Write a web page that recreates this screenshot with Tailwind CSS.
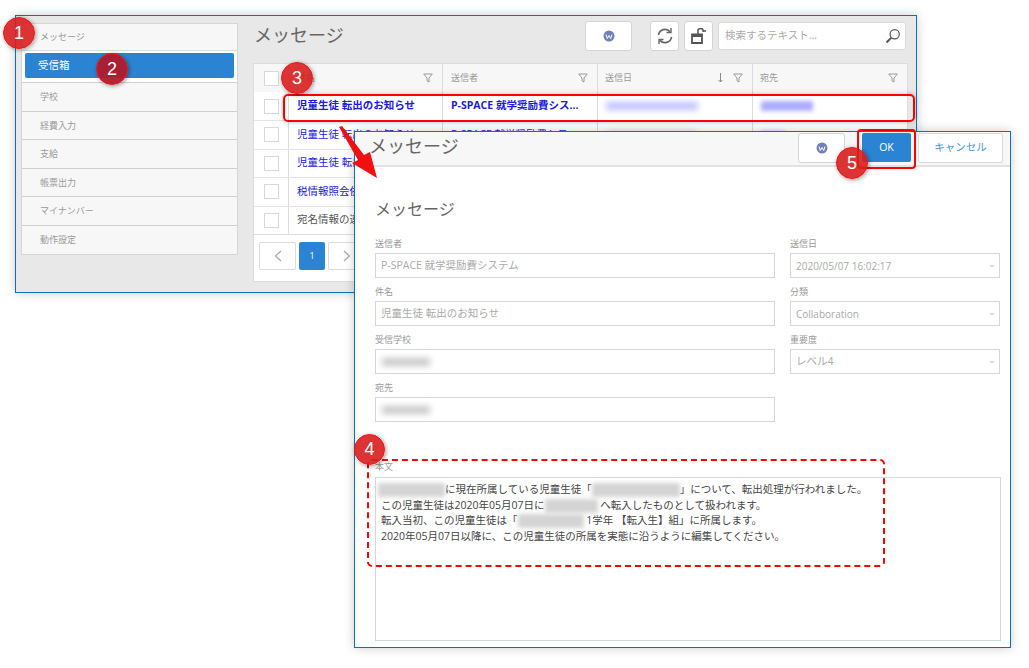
<!DOCTYPE html>
<html lang="ja">
<head>
<meta charset="UTF-8">
<title>メッセージ</title>
<script src="https://cdn.jsdelivr.net/npm/@tailwindcss/browser@4"></script>
</head>
<body class="bg-white overflow-hidden font-['Open_Sans','Noto_Sans_CJK_JP',sans-serif]">
<div class="relative w-[1029px] h-[668px] overflow-hidden">

  <!-- list window -->
  <section class="absolute left-[15px] top-[15px] w-[902px] h-[278px] bg-[#e8e8e8] border border-[#0f6fb5] shadow-[0_0_10px_rgba(0,0,0,0.2)] flex gap-[15px] pl-[5px] pt-[7px]">
    <nav class="w-[217px] h-[232px] bg-[#f7f7f7] border border-[#d6d6d6] flex flex-col text-[9px] text-[#9a9a9a] shrink-0">
      <div class="h-[27px] flex items-center pl-[18px] border-b border-[#dcdcdc]">メッセージ</div>
      <div class="h-[32px] bg-white border-b border-[#cfcfcf] px-[3px] py-[2px]">
        <div class="h-[25px] bg-[#2b84d3] rounded-[2px] text-white text-[10.5px] flex items-center pl-[13px]">受信箱</div>
      </div>
      <div class="h-[28.5px] flex items-center pl-[18px] border-b border-[#d0d0d0]">学校</div>
      <div class="h-[28.5px] flex items-center pl-[18px] border-b border-[#d0d0d0]">経費入力</div>
      <div class="h-[28.5px] flex items-center pl-[18px] border-b border-[#d0d0d0]">支給</div>
      <div class="h-[28.5px] flex items-center pl-[18px] border-b border-[#d0d0d0]">帳票出力</div>
      <div class="h-[28.5px] flex items-center pl-[18px] border-b border-[#d0d0d0]">マイナンバー</div>
      <div class="h-[28.5px] flex items-center pl-[18px]">動作設定</div>
    </nav>

    <main class="w-[655px] flex flex-col">
      <header class="h-[40px] flex items-start">
        <h1 class="text-[18px] leading-[22px] text-[#666] mt-[1px] ml-[1px] w-[331px]">メッセージ</h1>
        <button class="w-[47px] h-[30px] -mt-[2px] bg-white border border-[#d4d4d4] rounded-[3px] flex items-center justify-center">
          <svg width="12" height="12" viewBox="0 0 12 12"><circle cx="6" cy="6" r="5.5" fill="#6f82b8"/><path d="M3 4.500 4.300 8.500 6 5.500 7.700 8.500 9 4.500" stroke="#fff" fill="none" stroke-width="1"/></svg>
        </button>
        <button class="w-[29px] h-[30px] -mt-[2px] ml-[18px] bg-white border border-[#d4d4d4] rounded-[3px] flex items-center justify-center">
          <svg width="18" height="18" viewBox="0 0 18 18" fill="none" stroke="#666" stroke-width="1.700"><path d="M2.500 8A6.600 6.600 0 0 1 14 4.600"/><path d="M15.500 10A6.600 6.600 0 0 1 4 13.400"/><path d="M15 1v4.500h-4.500" stroke-width="1.400"/><path d="M3 17v-4.500h4.500" stroke-width="1.400"/></svg>
        </button>
        <button class="w-[29px] h-[30px] -mt-[2px] ml-[5px] bg-white border border-[#d4d4d4] rounded-[3px] flex items-center justify-center">
          <svg width="16" height="16" viewBox="0 0 16 16"><path d="M1 6.500h10V15H1z" fill="none" stroke="#555" stroke-width="1.800"/><path d="M1 6.500h10v2.500H1z" fill="#555"/><path d="M7 6V3.500A2.600 2.600 0 0 1 12.200 2.600V4M12.200 3H15" fill="none" stroke="#555" stroke-width="1.500"/></svg>
        </button>
        <div class="w-[188px] h-[28px] -mt-[1px] ml-[5px] bg-white border border-[#dadada] rounded-[3px] flex items-center justify-between pl-[6px] pr-[4px] text-[10.5px] text-[#aaa]">
          <span>検索するテキスト...</span>
          <svg width="16" height="16" viewBox="0 0 16 16" fill="none" stroke="#555"><circle cx="9.700" cy="6.300" r="4.600" stroke-width="1.200"/><path d="M6.400 9.600 1.500 14.500" stroke-width="2"/></svg>
        </div>
      </header>

      <div class="w-[655px] h-[219px] bg-white border border-[#dcdcdc] flex flex-col">
        <div class="h-[28px] bg-[#f7f7f7] grid grid-cols-[34px_154px_155px_155px_155px] text-[9px] text-[#999] shrink-0">
          <div class="flex items-center pl-[10px]"><i class="block w-[15px] h-[15px] bg-white border border-[#d8d8d8]"></i></div>
          <div class="border-l border-[#dcdcdc] flex items-center justify-between pl-[8px] pr-[9px]"><span>件名</span>
            <svg width="10" height="10" viewBox="0 0 10 10" fill="none" stroke="#999"><path d="M.7 1h8.600L6 5v4L4 7.800V5z"/></svg></div>
          <div class="border-l border-[#dcdcdc] flex items-center justify-between pl-[8px] pr-[9px]"><span>送信者</span>
            <svg width="10" height="10" viewBox="0 0 10 10" fill="none" stroke="#999"><path d="M.7 1h8.600L6 5v4L4 7.800V5z"/></svg></div>
          <div class="border-l border-[#dcdcdc] flex items-center pl-[7px] pr-[9px]"><span class="grow">送信日</span>
            <svg class="mr-[9px]" width="7" height="10" viewBox="0 0 7 10" fill="none" stroke="#888"><path d="M3.500 0v9M1.500 7l2 2 2-2"/></svg>
            <svg width="10" height="10" viewBox="0 0 10 10" fill="none" stroke="#999"><path d="M.7 1h8.600L6 5v4L4 7.800V5z"/></svg></div>
          <div class="border-l border-[#dcdcdc] flex items-center justify-between pl-[7px] pr-[9px]"><span>宛先</span>
            <svg width="10" height="10" viewBox="0 0 10 10" fill="none" stroke="#999"><path d="M.7 1h8.600L6 5v4L4 7.800V5z"/></svg></div>
        </div>

        <div class="h-[29px] grid grid-cols-[34px_154px_155px_155px_155px] text-[10.5px] text-[#1a1ae0] font-bold border-b border-[#e4e4e4] shrink-0">
          <div class="flex items-center pl-[10px]"><i class="block w-[15px] h-[15px] bg-white border border-[#d8d8d8]"></i></div>
          <div class="border-l border-[#dcdcdc] flex items-center pl-[8px]">児童生徒 転出のお知らせ</div>
          <div class="border-l border-[#dcdcdc] flex items-center pl-[8px]">P-SPACE 就学奨励費シス...</div>
          <div class="border-l border-[#dcdcdc] flex items-center pl-[8px]"><i class="block w-[92px] h-[8px] bg-[#c0c0ff] blur-[3px]"></i></div>
          <div class="border-l border-[#dcdcdc] flex items-center pl-[8px]"><i class="block w-[52px] h-[10px] bg-[#acacff] blur-[2px]"></i></div>
        </div>
        <div class="h-[28.5px] grid grid-cols-[34px_154px_155px_155px_155px] text-[10.5px] text-[#1a1ae0] border-b border-[#e4e4e4] shrink-0">
          <div class="flex items-center pl-[10px]"><i class="block w-[15px] h-[15px] bg-white border border-[#d8d8d8]"></i></div>
          <div class="border-l border-[#dcdcdc] flex items-center pl-[8px]">児童生徒 転出のお知らせ</div>
          <div class="border-l border-[#dcdcdc] flex items-center pl-[8px]">P-SPACE 就学奨励費シス...</div>
          <div class="border-l border-[#dcdcdc] flex items-center pl-[8px]"><i class="block w-[90px] h-[7px] bg-[#d4d4ff] blur-[3px]"></i></div>
          <div class="border-l border-[#dcdcdc] flex items-center pl-[8px]"><i class="block w-[24px] h-[8px] bg-[#bcbcff] blur-[2px]"></i></div>
        </div>
        <div class="h-[28.5px] grid grid-cols-[34px_154px] text-[10.5px] text-[#1a1ae0] border-b border-[#e4e4e4] shrink-0">
          <div class="flex items-center pl-[10px]"><i class="block w-[15px] h-[15px] bg-white border border-[#d8d8d8]"></i></div>
          <div class="border-l border-[#dcdcdc] flex items-center pl-[8px] whitespace-nowrap">児童生徒 転出</div>
        </div>
        <div class="h-[28.5px] grid grid-cols-[34px_154px] text-[10.5px] text-[#1a1ae0] border-b border-[#e4e4e4] shrink-0">
          <div class="flex items-center pl-[10px]"><i class="block w-[15px] h-[15px] bg-white border border-[#d8d8d8]"></i></div>
          <div class="border-l border-[#dcdcdc] flex items-center pl-[8px] whitespace-nowrap">税情報照会依頼</div>
        </div>
        <div class="h-[28.5px] grid grid-cols-[34px_154px] text-[10.5px] text-[#555] border-b border-[#dcdcdc] shrink-0">
          <div class="flex items-center pl-[10px]"><i class="block w-[15px] h-[15px] bg-white border border-[#d8d8d8]"></i></div>
          <div class="border-l border-[#dcdcdc] flex items-center pl-[8px] whitespace-nowrap">宛名情報の連携</div>
        </div>
        <div class="flex gap-[3px] pl-[5px] pt-[7px]">
          <div class="w-[37px] h-[28px] bg-white border border-[#dcdcdc] rounded-[2px] flex items-center justify-center">
            <svg width="8" height="12" viewBox="0 0 8 12" fill="none" stroke="#aaa" stroke-width="1.200"><path d="M7 1 1.500 6 7 11"/></svg>
          </div>
          <div class="w-[26px] h-[28px] bg-[#2b84d3] rounded-[2px] text-white text-[9px] flex items-center justify-center">1</div>
          <div class="w-[37px] h-[28px] bg-white border border-[#dcdcdc] rounded-[2px] flex items-center justify-center">
            <svg width="8" height="12" viewBox="0 0 8 12" fill="none" stroke="#aaa" stroke-width="1.200"><path d="M1 1l5.500 5L1 11"/></svg>
          </div>
        </div>
      </div>
    </main>
  </section>

  <!-- detail window -->
  <section class="absolute left-[354px] top-[131px] w-[657px] h-[517px] bg-white border border-[#0f6fb5] shadow-[0_0_10px_rgba(0,0,0,0.2)] flex flex-col">
    <header class="h-[35px] bg-[#f7f7f7] border-b-2 border-[#e2e2e2] flex items-start shrink-0">
      <h2 class="text-[18px] leading-[22px] text-[#666] ml-[14px] mt-[3px] w-[429px]">メッセージ</h2>
      <button class="w-[47px] h-[30px] mt-[1px] bg-white border border-[#d4d4d4] rounded-[3px] flex items-center justify-center">
        <svg width="12" height="12" viewBox="0 0 12 12"><circle cx="6" cy="6" r="5.500" fill="#6f82b8"/><path d="M3 4.500 4.300 8.500 6 5.500 7.700 8.500 9 4.500" stroke="#fff" fill="none" stroke-width="1"/></svg>
      </button>
      <button class="w-[49px] h-[29px] mt-[1px] ml-[17px] bg-[#2b84d3] rounded-[2px] text-white text-[10.5px]">OK</button>
      <button class="w-[85px] h-[30px] mt-[1px] ml-[7px] bg-white border border-[#d9d9d9] rounded-[2px] text-[#3f97dc] text-[10.5px]">キャンセル</button>
    </header>
    <div class="pl-[20px] pr-[9px] flex flex-col">
      <h3 class="text-[16px] leading-[20px] text-[#666] mt-[32px] mb-[19px]">メッセージ</h3>
      <div class="grid grid-cols-[400px_210px] gap-x-[15px]">
        <div class="flex flex-col">
          <label class="text-[9px] leading-[12px] text-[#999] h-[15px]">送信者</label>
          <div class="h-[25px] border border-[#d6d6d6] text-[10.5px] text-[#aaa] flex items-center pl-[5px] pt-[1px] mb-[8px]">P-SPACE 就学奨励費システム</div>
          <label class="text-[9px] leading-[12px] text-[#999] h-[15px]">件名</label>
          <div class="h-[25px] border border-[#d6d6d6] text-[10.5px] text-[#aaa] flex items-center pl-[5px] pt-[1px] mb-[8px]">児童生徒 転出のお知らせ</div>
          <label class="text-[9px] leading-[12px] text-[#999] h-[15px]">受信学校</label>
          <div class="h-[25px] border border-[#d6d6d6] flex items-center pl-[6px] mb-[8px]"><i class="block w-[48px] h-[8px] bg-[#c8c8c8] blur-[3px]"></i></div>
          <label class="text-[9px] leading-[12px] text-[#999] h-[15px]">宛先</label>
          <div class="h-[25px] border border-[#d6d6d6] flex items-center pl-[6px]"><i class="block w-[48px] h-[8px] bg-[#c8c8c8] blur-[3px]"></i></div>
        </div>
        <div class="flex flex-col">
          <label class="text-[9px] leading-[12px] text-[#999] h-[15px]">送信日</label>
          <div class="h-[25px] border border-[#d6d6d6] text-[10px] text-[#aaa] flex items-center justify-between pl-[5px] pt-[1px] pr-[4px] mb-[8px]"><span>2020/05/07 16:02:17</span><i class="block border-x-[3.500px] border-x-transparent border-t-[3px] border-t-[#ddd]"></i></div>
          <label class="text-[9px] leading-[12px] text-[#999] h-[15px]">分類</label>
          <div class="h-[25px] border border-[#d6d6d6] text-[10px] text-[#aaa] flex items-center justify-between pl-[5px] pt-[1px] pr-[4px] mb-[8px]"><span>Collaboration</span><i class="block border-x-[3.500px] border-x-transparent border-t-[3px] border-t-[#ddd]"></i></div>
          <label class="text-[9px] leading-[12px] text-[#999] h-[15px]">重要度</label>
          <div class="h-[25px] border border-[#d6d6d6] text-[10.5px] text-[#aaa] flex items-center justify-between pl-[5px] pt-[1px] pr-[4px]"><span>レベル4</span><i class="block border-x-[3.500px] border-x-transparent border-t-[3px] border-t-[#ddd]"></i></div>
        </div>
      </div>
      <label class="text-[9px] leading-[12px] text-[#999] mt-[39px] h-[16px]">本文</label>
      <div class="h-[164px] w-[626px] border border-[#d6d6d6] pt-[4px] pl-[5px] text-[10.5px] leading-[15.500px] text-[#444] whitespace-nowrap">
        <div><i class="inline-block align-middle w-[67px] h-[14px] -ml-[3px] bg-[#d4d4d4] blur-[2px]"></i>に現在所属している児童生徒「<i class="inline-block align-middle w-[88px] h-[14px] bg-[#d4d4d4] blur-[2px]"></i>」について、転出処理が行われました。</div>
        <div>この児童生徒は2020年05月07日に<i class="inline-block align-middle w-[53px] h-[14px] bg-[#d4d4d4] blur-[2px]"></i> へ転入したものとして扱われます。</div>
        <div>転入当初、この児童生徒は「<i class="inline-block align-middle w-[66px] h-[14px] bg-[#d4d4d4] blur-[2px]"></i> 1学年 【転入生】組」に所属します。</div>
        <div>2020年05月07日以降に、この児童生徒の所属を実態に沿うように編集してください。</div>
      </div>
    </div>
  </section>

  <!-- callouts -->
  <svg class="absolute left-0 top-0 pointer-events-none" width="1029" height="668" viewBox="0 0 1029 668" fill="none">
    <path d="M339 127 342 126 364 155 370 152 377 178 352 163 358 160z" fill="#f01010"/>
  </svg>
  <div class="absolute left-[283px] top-[94px] w-[632px] h-[28px] border-2 border-[#f00] rounded-[5px] shadow-[0_0_4px_rgba(0,0,0,0.3)]"></div>
  <div class="absolute left-[857px] top-[129px] w-[59px] h-[40px] border-2 border-[#f00] rounded-[4px]"></div>
  <div class="absolute left-[367px] top-[459px] w-[518px] h-[108px] border-2 border-dashed border-[#f00] rounded-[5px]"></div>

  <div class="absolute left-[3px] top-[17px] w-[32px] h-[32px] rounded-full bg-[#d81e1e]/90 border border-[#f01515] text-white text-[18px] font-['Liberation_Sans',sans-serif] flex items-center justify-center shadow-[1px_1px_4px_rgba(0,0,0,0.4)]">1</div>
  <div class="absolute left-[96px] top-[53px] w-[32px] h-[32px] rounded-full bg-[#b01a2c]/95 border border-[#f01515] text-white text-[18px] font-['Liberation_Sans',sans-serif] flex items-center justify-center shadow-[1px_1px_4px_rgba(0,0,0,0.4)]">2</div>
  <div class="absolute left-[281px] top-[62px] w-[32px] h-[32px] rounded-full bg-[#d81e1e]/90 border border-[#f01515] text-white text-[18px] font-['Liberation_Sans',sans-serif] flex items-center justify-center shadow-[1px_1px_4px_rgba(0,0,0,0.4)]">3</div>
  <div class="absolute left-[354px] top-[434px] w-[31px] h-[31px] rounded-full bg-[#d81e1e]/90 border border-[#f01515] text-white text-[18px] font-['Liberation_Sans',sans-serif] flex items-center justify-center shadow-[1px_1px_4px_rgba(0,0,0,0.4)]">4</div>
  <div class="absolute left-[836px] top-[147px] w-[32px] h-[32px] rounded-full bg-[#d81e1e]/90 border border-[#f01515] text-white text-[18px] font-['Liberation_Sans',sans-serif] flex items-center justify-center shadow-[1px_1px_4px_rgba(0,0,0,0.4)]">5</div>
</div>
</body>
</html>
